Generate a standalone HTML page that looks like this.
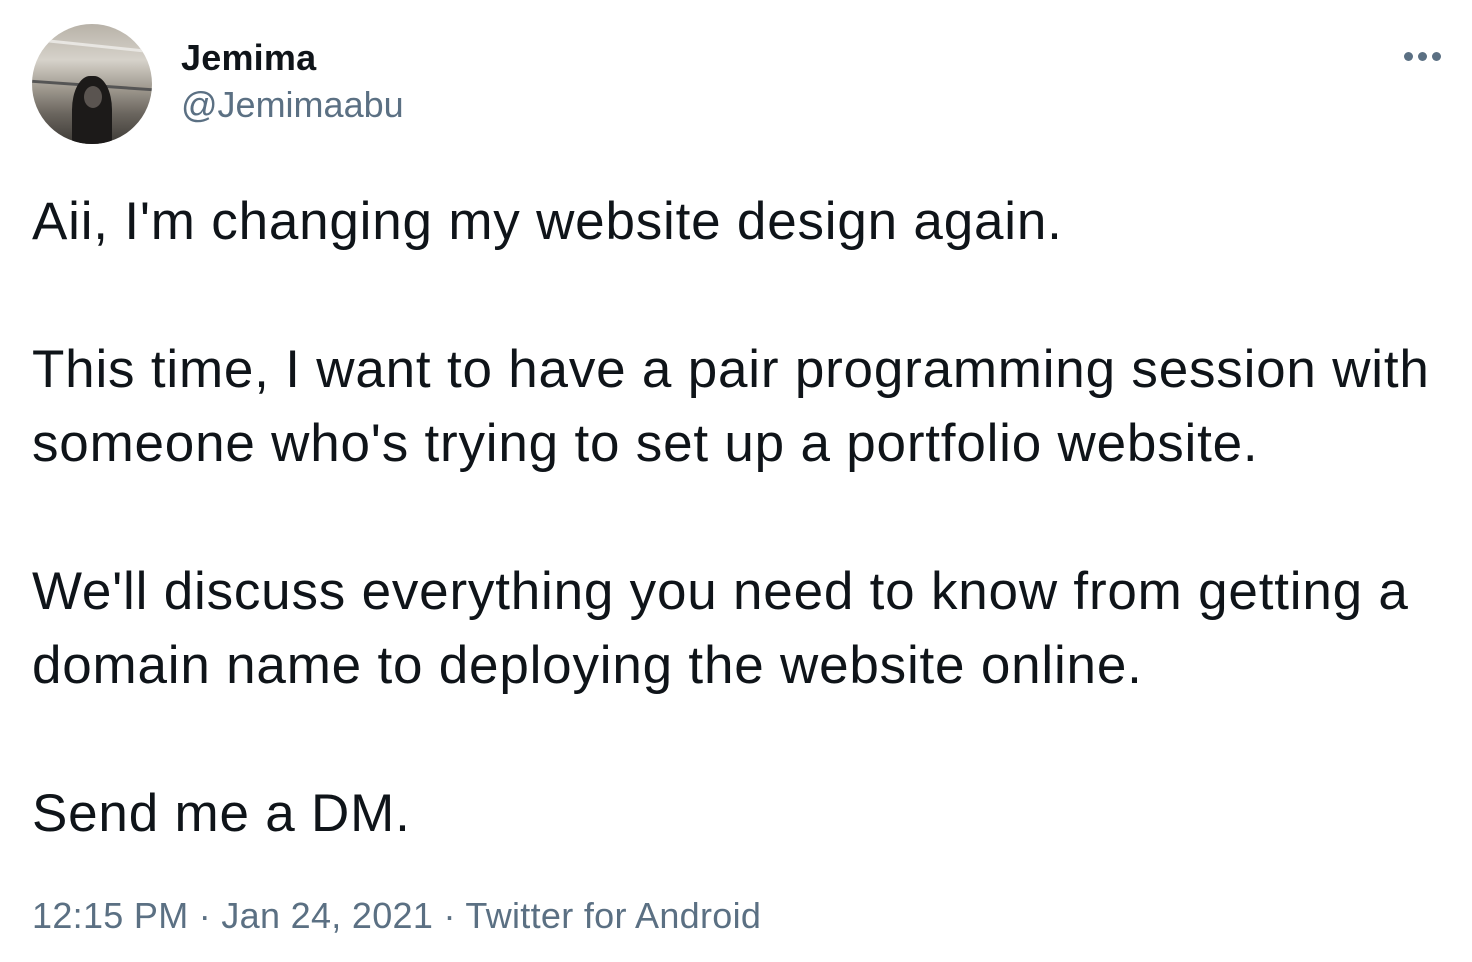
<!DOCTYPE html>
<html><head><meta charset="utf-8"><style>
html,body{margin:0;padding:0;background:#fff;width:1472px;height:962px;overflow:hidden;font-family:"Liberation Sans",Arial,sans-serif;}
.av{position:absolute;left:32px;top:24px;width:120px;height:120px;border-radius:50%;overflow:hidden;background:linear-gradient(180deg,#b8b2a8 0%,#d6d2ca 30%,#9c968c 55%,#6a655e 75%,#3d3a36 100%);}
.name{position:absolute;left:181px;top:37px;font-size:36px;font-weight:bold;color:#0f1419;letter-spacing:0.2px;}
.handle{position:absolute;left:181px;top:84px;font-size:36px;color:#5b7083;}
.dot{position:absolute;top:52px;width:9px;height:9px;border-radius:50%;background:#5b7083;}
.body{position:absolute;left:32px;top:185px;font-size:53px;line-height:74px;color:#0f1419;white-space:pre;letter-spacing:0.8px;}
.meta{position:absolute;left:32px;top:895px;font-size:36px;color:#5b7083;letter-spacing:0.3px;}
</style></head><body>
<div class="av">
<div style="position:absolute;left:0;top:20px;width:120px;height:3px;background:#e8e6e2;transform:rotate(6deg)"></div>
<div style="position:absolute;left:0;top:60px;width:120px;height:3px;background:#555;transform:rotate(4deg)"></div>
<div style="position:absolute;left:40px;top:52px;width:40px;height:75px;border-radius:45% 45% 10% 10%;background:#1c1a19"></div>
<div style="position:absolute;left:52px;top:62px;width:18px;height:22px;border-radius:50%;background:#5a5450"></div>
</div>
<div class="name">Jemima</div>
<div class="handle">@Jemimaabu</div>
<div class="dot" style="left:1404px"></div>
<div class="dot" style="left:1418px"></div>
<div class="dot" style="left:1432px"></div>
<div class="body">Aii, I'm changing my website design again.

This time, I want to have a pair programming session with
someone who's trying to set up a portfolio website.

We'll discuss everything you need to know from getting a
domain name to deploying the website online.

Send me a DM.</div>
<div class="meta">12:15 PM · Jan 24, 2021 · Twitter for Android</div>
</body></html>
